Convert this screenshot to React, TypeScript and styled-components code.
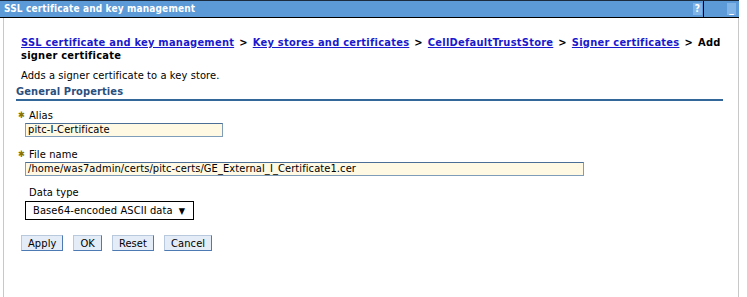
import React from 'react'
import styled, { createGlobalStyle } from 'styled-components'

const GlobalStyle = createGlobalStyle`
  body {
    margin: 0;
    background: #ffffff;
    font-family: "DejaVu Sans Condensed", "DejaVu Sans", sans-serif;
    font-size: 11px;
    letter-spacing: 0.1px;
    color: #000000;
  }
`

const Portlet = styled.div`
  width: 739px;
`

const TitleBar = styled.div`
  display: flex;
  align-items: stretch;
  height: 16px;
  background-color: #5b9ad6;
  border-top: 1px solid #1c2b3d;
  border-bottom: 1px solid #000000;
`

const Title = styled.div`
  flex: 1;
  padding-left: 4px;
  color: #ffffff;
  font-weight: bold;
  font-size: 10px;
  letter-spacing: 0.15px;
  line-height: 16px;
`

const TitleButton = styled.div<{ $divider?: boolean }>`
  width: 36px;
  display: flex;
  align-items: center;
  justify-content: flex-end;
  padding-right: ${(p) => (p.$divider ? '3px' : '1px')};
  box-sizing: border-box;
  border-left: ${(p) => (p.$divider ? '1px solid #000000' : 'none')};
`

const IconBox = styled.span`
  width: 9px;
  height: 12px;
  background-color: #80b3e6;
  color: #ffffff;
  font-weight: bold;
  font-size: 10px;
  line-height: 12px;
  text-align: center;
`

const Panel = styled.div`
  margin-left: 3px;
  height: 271px;
  border-left: 1px solid #c8c8c8;
  border-right: 1px solid #c8c8c8;
  border-bottom: 1px solid #c8c8c8;
  padding: 18px 15px 0 12px;
`

const Crumbs = styled.div`
  padding-left: 5px;
  font-weight: bold;
  font-size: 11px;
  letter-spacing: 0.25px;
  line-height: 13px;
`

const Crumb = styled.a`
  color: #1a1acc;
  text-decoration: underline;
`

const Sep = styled.span`
  margin: 0 5px;
`

const Description = styled.div`
  padding-left: 5px;
  margin-top: 7px;
  line-height: 13px;
`

const SectionHeader = styled.div`
  margin-top: 3px;
  color: #2b4f7e;
  font-weight: bold;
  font-size: 11px;
  line-height: 13px;
  border-bottom: 2px solid #336699;
  padding-bottom: 1px;
`

const Form = styled.div`
  display: flex;
  flex-direction: column;
  padding-left: 2px;
  margin-top: 8px;
`

const Field = styled.div`
  display: flex;
  flex-direction: column;
  margin-bottom: 11px;
`

const Label = styled.label<{ $required?: boolean }>`
  display: flex;
  align-items: center;
  gap: 3px;
  height: 13px;
  margin-top: ${(p) => (p.$required ? '0' : '-1px')};
  padding-left: ${(p) => (p.$required ? '0' : '11px')};
  line-height: 13px;
`

const Star = styled.span`
  color: #8a7400;
  font-size: 9px;
  width: 8px;
`

const TextInput = styled.div<{ $width: number }>`
  width: ${(p) => p.$width}px;
  height: 12px;
  margin-left: 7px;
  margin-top: 1px;
  padding: 0 2px;
  background-color: #fff8e2;
  border: 1px solid #7f9db9;
  border-top-color: #4a6e96;
  line-height: 12px;
  white-space: nowrap;
  overflow: hidden;
`

const Select = styled.div`
  display: flex;
  justify-content: space-between;
  align-items: center;
  box-sizing: border-box;
  width: 169px;
  height: 19px;
  margin-left: 7px;
  margin-top: 2px;
  padding: 0 8px 0 7px;
  border: 1px solid #000000;
  background: #ffffff;
`

const Arrow = styled.span`
  font-size: 9px;
`

const Buttons = styled.div`
  display: flex;
  gap: 10px;
  margin-top: 4px;
  padding-left: 5px;
`

const Button = styled.button`
  font-family: inherit;
  font-size: 11px;
  letter-spacing: 0.1px;
  height: 16px;
  padding: 0 6px;
  line-height: 13px;
  color: #000000;
  background-color: #e4ecf7;
  border: 1px solid #4d7ab3;
  border-top-color: #b8c9de;
  border-left-color: #b8c9de;
  border-radius: 0;
`

export default function App() {
  return (
    <>
      <GlobalStyle />
      <Portlet>
        <TitleBar>
          <Title>SSL certificate and key management</Title>
          <TitleButton>
            <IconBox>?</IconBox>
          </TitleButton>
          <TitleButton $divider>
            <IconBox>_</IconBox>
          </TitleButton>
        </TitleBar>
        <Panel>
          <Crumbs>
            <Crumb>SSL certificate and key management</Crumb>
            <Sep>&gt;</Sep>
            <Crumb>Key stores and certificates</Crumb>
            <Sep>&gt;</Sep>
            <Crumb>CellDefaultTrustStore</Crumb>
            <Sep>&gt;</Sep>
            <Crumb>Signer certificates</Crumb>
            <Sep>&gt;</Sep>
            Add signer certificate
          </Crumbs>
          <Description>Adds a signer certificate to a key store.</Description>
          <SectionHeader>General Properties</SectionHeader>
          <Form>
            <Field>
              <Label $required>
                <Star>✱</Star>Alias
              </Label>
              <TextInput $width={192}>pitc-I-Certificate</TextInput>
            </Field>
            <Field>
              <Label $required>
                <Star>✱</Star>File name
              </Label>
              <TextInput $width={553}>
                /home/was7admin/certs/pitc-certs/GE_External_I_Certificate1.cer
              </TextInput>
            </Field>
            <Field>
              <Label>Data type</Label>
              <Select>
                <span>Base64-encoded ASCII data</span>
                <Arrow>▼</Arrow>
              </Select>
            </Field>
          </Form>
          <Buttons>
            <Button>Apply</Button>
            <Button>OK</Button>
            <Button>Reset</Button>
            <Button>Cancel</Button>
          </Buttons>
        </Panel>
      </Portlet>
    </>
  )
}
